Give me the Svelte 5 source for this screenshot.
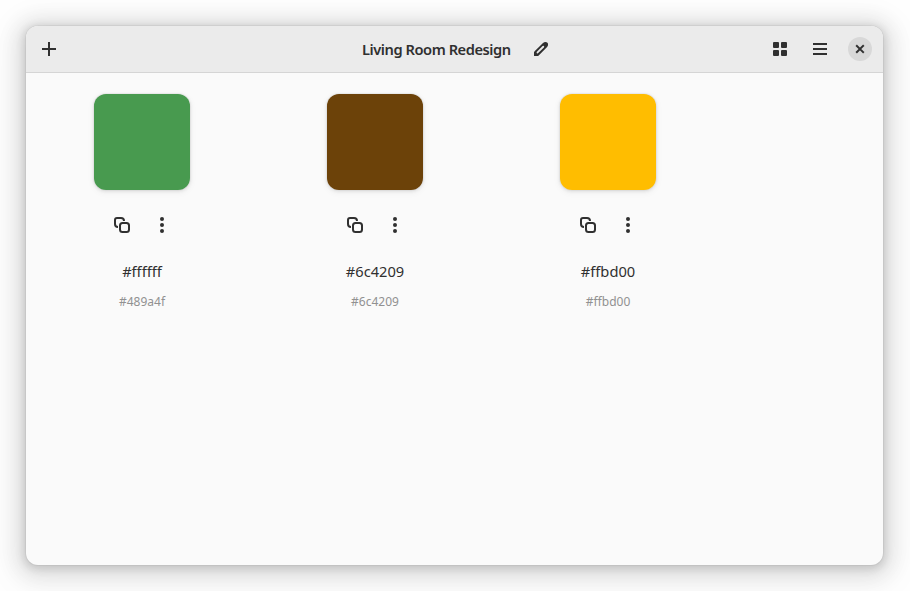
<script>
  const colors = [
    { name: '#ffffff', hex: '#489a4f' },
    { name: '#6c4209', hex: '#6c4209' },
    { name: '#ffbd00', hex: '#ffbd00' }
  ];
</script>

<div class="desktop">
  <main class="window">
    <header>
      <div class="side">
        <button aria-label="Add color"><svg viewBox="0 0 16 16"><path d="M8 1v14M1 8h14" fill="none" stroke="currentColor" stroke-width="2" /></svg></button>
      </div>
      <div class="title">
        <h1>Living Room Redesign</h1>
        <button aria-label="Rename"><svg viewBox="0 0 16 16"><path fill="currentColor" fill-rule="evenodd" d="M1 15v-3.4Q1 10.9 1.6 10.3L10 1.9Q11.1.9 12.4.9Q15.1.9 15.1 3.6Q15.1 4.9 14.1 6L5.7 14.4Q5.1 15 4.4 15ZM3.9 10.8Q3.2 11.5 3.9 12.2Q4.5 12.8 5.2 12.1L10.9 6.4Q11.6 5.7 10.9 5.1Q10.3 4.4 9.6 5.1Z" /></svg></button>
      </div>
      <div class="side end">
        <button aria-label="Palettes"><svg viewBox="0 0 16 16" fill="currentColor"><rect x="1" y="1" width="6" height="6" rx="1" /><rect x="9" y="1" width="6" height="6" rx="1" /><rect x="1" y="9" width="6" height="6" rx="1" /><rect x="9" y="9" width="6" height="6" rx="1" /></svg></button>
        <button aria-label="Menu"><svg viewBox="0 0 16 16"><path d="M1 3h14M1 8h14M1 13h14" fill="none" stroke="currentColor" stroke-width="2" /></svg></button>
        <button class="close" aria-label="Close"><svg viewBox="0 0 16 16"><path d="M4.9 4.9l6.2 6.2M11.1 4.9l-6.2 6.2" fill="none" stroke="currentColor" stroke-width="2" stroke-linecap="square" /></svg></button>
      </div>
    </header>
    <section>
      {#each colors as color}
        <article>
          <div class="swatch" style="background: {color.hex}"></div>
          <div class="actions">
            <button aria-label="Copy"><svg viewBox="0 0 16 16" fill="none" stroke="currentColor" stroke-width="2"><path d="M4 10a3 3 0 0 1-3-3V3a2 2 0 0 1 2-2h4a3 3 0 0 1 3 3" /><rect x="6" y="6" width="9" height="9" rx="2.5" /></svg></button>
            <button aria-label="More"><svg viewBox="0 0 16 16" fill="currentColor"><circle cx="8" cy="2" r="2" /><circle cx="8" cy="8" r="2" /><circle cx="8" cy="14" r="2" /></svg></button>
          </div>
          <p class="name">{color.name}</p>
          <p class="hex">{color.hex}</p>
        </article>
      {/each}
    </section>
  </main>
</div>

<style>
  .desktop {
    box-sizing: border-box;
    width: 910px;
    height: 591px;
    padding: 26px 27px 26px 26px;
    background: #fefefe;
    overflow: hidden;
    font-family: "Noto Sans", sans-serif;
    color: #303030;
  }
  .window {
    height: 539px;
    border-radius: 12px;
    background: #fafafa;
    box-shadow: 0 0 0 1px rgba(0, 0, 0, 0.04), 0 2px 8px 2px rgba(0, 0, 0, 0.13), 0 3px 20px 10px rgba(0, 0, 0, 0.09), 0 6px 32px 16px rgba(0, 0, 0, 0.04);
    overflow: hidden;
  }
  header {
    box-sizing: border-box;
    height: 47px;
    display: flex;
    align-items: center;
    padding: 0 11px;
    background: #ebebeb;
    border-bottom: 1px solid #d5d5d5;
  }
  .side { width: 104px; display: flex; }
  .end { justify-content: flex-end; gap: 16px; }
  .side button { margin: 0 4px; }
  .end button { margin: 0; }
  .title {
    flex: 1;
    display: flex;
    align-items: center;
    justify-content: center;
    gap: 22px;
    padding-left: 2px;
  }
  h1 { margin: 0; width: 149px; font-size: 14.67px; line-height: 20px; font-weight: 650; letter-spacing: -0.45px; white-space: nowrap; }
  button {
    display: grid;
    place-items: center;
    width: 16px;
    height: 16px;
    padding: 0;
    border: 0;
    background: none;
    color: inherit;
  }
  svg { display: block; width: 16px; height: 16px; }
  .end button { width: 24px; height: 24px; }
  .close { border-radius: 50%; background: #d8d8d8; }
  section { display: flex; padding: 21px 0 0; }
  article {
    width: 232px;
    margin-right: 1px;
    display: flex;
    flex-direction: column;
    align-items: center;
  }
  .swatch {
    width: 96px;
    height: 96px;
    border-radius: 12px;
    box-shadow: 0 0 0 1px rgba(0, 0, 0, 0.03), 0 1px 3px 1px rgba(0, 0, 0, 0.07), 0 2px 6px 2px rgba(0, 0, 0, 0.03);
  }
  .actions { display: flex; gap: 24px; margin-top: 27px; }
  p { margin: 0; }
  .name { margin-top: 28px; font-size: 14.67px; line-height: 20px; }
  .hex { margin-top: 12px; font-size: 12px; line-height: 18px; color: #919191; }
</style>
